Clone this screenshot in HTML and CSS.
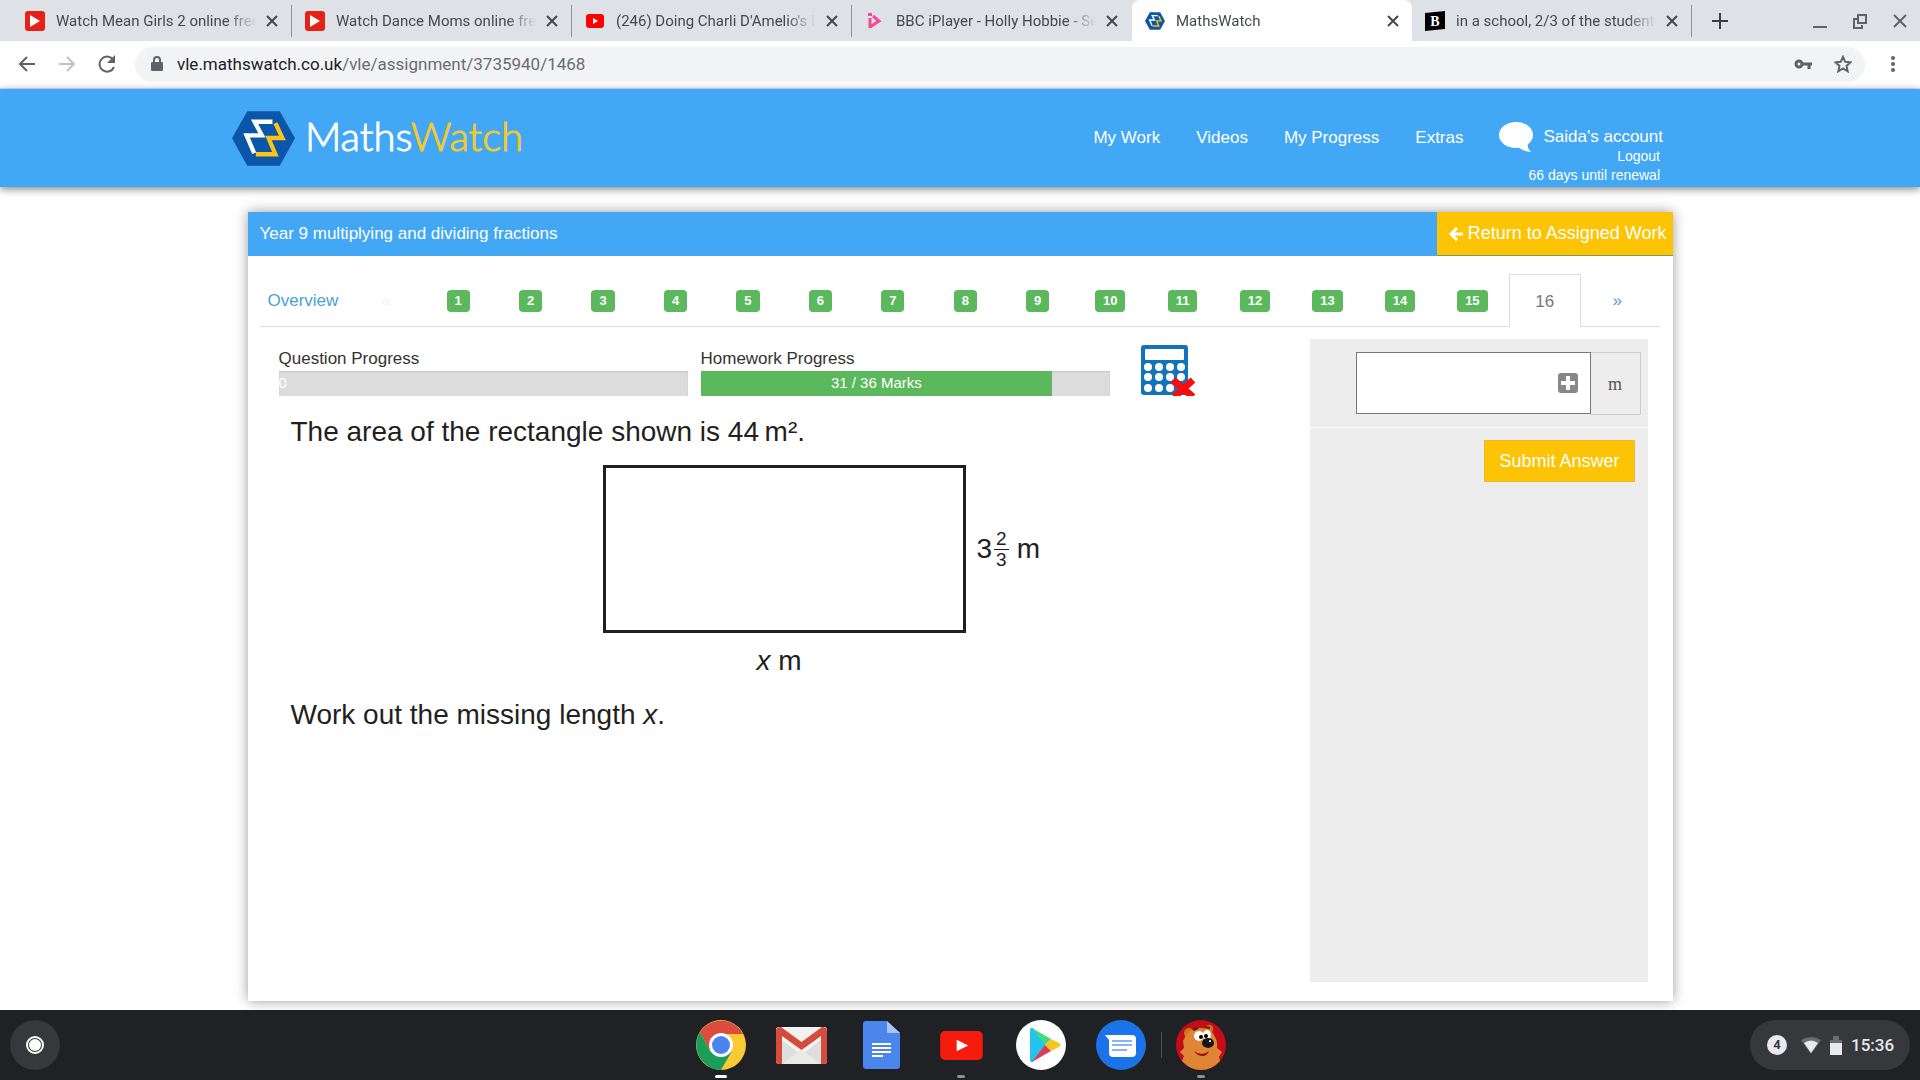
FILE: index.html
```html
<!DOCTYPE html>
<html lang="en">
<head>
    <meta charset="UTF-8" />
    <meta name="viewport" content="width=device-width, initial-scale=1" />
    <title>MathsWatch</title>
    <link rel="stylesheet" href="styles.css">
</head>
<body>
    <svg class="sprite" aria-hidden="true">
        <symbol id="close" viewBox="0 0 12 12"><path d="M1 1l10 10M11 1L1 11" stroke="currentColor" stroke-width="2" /></symbol>
        <symbol id="play-red" viewBox="0 0 20 20"><rect width="20" height="20" rx="3" fill="#e62117" /><path d="M5 4l10 6-10 6z" fill="#fff" /></symbol>
        <symbol id="youtube" viewBox="0 0 44 30"><rect width="44" height="30" rx="5" fill="#f61c0d" /><path d="M17 9l12 6-12 6z" fill="#fff" /></symbol>
        <symbol id="maths" viewBox="36 60 190 165">
            <path d="M36 142L82 60h98l46 82-46 83H82z" fill="#0b56a8" />
            <path d="M158 92h-54l22 41H80l23 54" fill="none" stroke="#fff" stroke-width="13" />
            <path d="M167 96l21 45h-42l21 49h-59" fill="none" stroke="#fcc419" stroke-width="13" />
        </symbol>
    </svg>

    <div class="tab-strip">
        <div class="tab">
            <svg class="favicon"><use href="#play-red" /></svg>
            <span class="tab-title">Watch Mean Girls 2 online free</span>
            <button class="tab-close" aria-label="Close tab"><svg><use href="#close" /></svg></button>
        </div>
        <div class="tab">
            <svg class="favicon"><use href="#play-red" /></svg>
            <span class="tab-title">Watch Dance Moms online free</span>
            <button class="tab-close" aria-label="Close tab"><svg><use href="#close" /></svg></button>
        </div>
        <div class="tab">
            <svg class="favicon" viewBox="0 0 20 20"><rect x="1" y="3" width="18" height="14" rx="3" fill="#f00" /><path d="M8 7l5 3-5 3z" fill="#fff" /></svg>
            <span class="tab-title">(246) Doing Charli D'Amelio's Dance</span>
            <button class="tab-close" aria-label="Close tab"><svg><use href="#close" /></svg></button>
        </div>
        <div class="tab before-active">
            <svg class="favicon" viewBox="0 0 20 20"><path d="M5 7v10M5 16l9-6-6-5" fill="none" stroke="#f54997" stroke-width="3" /><path d="M3 2h4v3H3z" fill="#f54997" /></svg>
            <span class="tab-title">BBC iPlayer - Holly Hobbie - Series</span>
            <button class="tab-close" aria-label="Close tab"><svg><use href="#close" /></svg></button>
        </div>
        <div class="tab active">
            <svg class="favicon"><use href="#maths" /></svg>
            <span class="tab-title">MathsWatch</span>
            <button class="tab-close" aria-label="Close tab"><svg><use href="#close" /></svg></button>
        </div>
        <div class="tab">
            <svg class="favicon" viewBox="0 0 20 20"><path d="M0 2l20-2v18L0 20z" /><text x="10" y="15" class="brainly">B</text></svg>
            <span class="tab-title">in a school, 2/3 of the students</span>
            <button class="tab-close" aria-label="Close tab"><svg><use href="#close" /></svg></button>
        </div>
        <button class="new-tab" aria-label="New tab"><svg viewBox="0 0 16 16"><path d="M8 0v16M0 8h16" stroke="#3c4043" stroke-width="2" /></svg></button>
        <div class="window-buttons">
            <button aria-label="Minimise"><svg viewBox="0 0 16 16"><path d="M1 14h14" stroke="#5f6368" stroke-width="2" /></svg></button>
            <button aria-label="Restore"><svg viewBox="0 0 16 16"><path d="M6 2h8v8H6zM5 6H2v9h8v-3" fill="none" stroke="#5f6368" stroke-width="2" /></svg></button>
            <button aria-label="Close window"><svg viewBox="0 0 16 16"><path d="M2 2l12 12M14 2L2 14" stroke="#5f6368" stroke-width="2" /></svg></button>
        </div>
    </div>

    <div class="toolbar">
        <button aria-label="Back"><svg viewBox="0 0 18 18"><path d="M17 9H2M9 2L2 9l7 7" fill="none" stroke="#5f6368" stroke-width="2" /></svg></button>
        <button aria-label="Forward"><svg viewBox="0 0 18 18"><path d="M1 9h15M9 2l7 7-7 7" fill="none" stroke="#bdc1c6" stroke-width="2" /></svg></button>
        <button aria-label="Reload"><svg viewBox="0 0 18 18"><path d="M15 4.500A7.500 7.500 0 1 0 16 12" fill="none" stroke="#5f6368" stroke-width="2" /><path d="M17 0v8H9z" fill="#5f6368" /></svg></button>
        <div class="omnibox">
            <svg class="lock" viewBox="0 0 12 16"><rect y="6" width="12" height="9" rx="1" fill="#5f6368" /><path d="M3 7V4a3 3 0 0 1 6 0v3" fill="none" stroke="#5f6368" stroke-width="2" /></svg>
            <div class="address" role="textbox" aria-label="Address"><span>vle.mathswatch.co.uk</span>/vle/assignment/3735940/1468</div>
            <button aria-label="Passwords"><svg viewBox="0 0 18 18"><circle cx="5" cy="9" r="3" fill="none" stroke="#5f6368" stroke-width="3" /><path d="M9 9h9M15 9v5" stroke="#5f6368" stroke-width="3" /></svg></button>
            <button aria-label="Bookmark"><svg viewBox="0 0 18 18"><path d="M9 1.800l2.200 5 5.300.5-4 3.600 1.200 5.400L9 13.500l-4.700 2.800 1.200-5.400-4-3.600 5.300-.5z" fill="none" stroke="#5f6368" stroke-width="2" /></svg></button>
        </div>
        <button aria-label="Menu"><svg viewBox="0 0 18 18" fill="#5f6368"><circle cx="9" cy="3" r="2" /><circle cx="9" cy="9" r="2" /><circle cx="9" cy="15" r="2" /></svg></button>
    </div>

    <header>
        <div class="header-inner">
            <a class="logo" href="#"><svg><use href="#maths" /></svg><span>Maths<b>Watch</b></span></a>
            <nav>
                <a href="#">My Work</a>
                <a href="#">Videos</a>
                <a href="#">My Progress</a>
                <a href="#">Extras</a>
            </nav>
            <div class="account">
                <a class="account-name" href="#">
                    <svg viewBox="0 0 35 30"><ellipse cx="17" cy="13" rx="17" ry="13" fill="#fff" /><path d="M18 24c3 3 8 6 14 6-3-3-4-6-3-10z" fill="#fff" /></svg>
                    Saida's account
                </a>
                <a class="account-line" href="#">Logout</a>
                <span class="account-line">66 days until renewal</span>
            </div>
        </div>
    </header>

    <main>
        <section class="panel">
            <div class="panel-title">
                <h1>Year 9 multiplying and dividing fractions</h1>
                <a class="return" href="#">
                    <svg viewBox="0 0 14 14"><path d="M14 7H3M8 1L2 7l6 6" fill="none" stroke="#fff" stroke-width="3" /></svg>
                    Return to Assigned Work
                </a>
            </div>

            <div class="questions">
                <a class="overview" href="#">Overview</a>
                <a class="previous" href="#">«</a>
                <a href="#"><span class="badge">1</span></a>
                <a href="#"><span class="badge">2</span></a>
                <a href="#"><span class="badge">3</span></a>
                <a href="#"><span class="badge">4</span></a>
                <a href="#"><span class="badge">5</span></a>
                <a href="#"><span class="badge">6</span></a>
                <a href="#"><span class="badge">7</span></a>
                <a href="#"><span class="badge">8</span></a>
                <a href="#"><span class="badge">9</span></a>
                <a href="#"><span class="badge">10</span></a>
                <a href="#"><span class="badge">11</span></a>
                <a href="#"><span class="badge">12</span></a>
                <a href="#"><span class="badge">13</span></a>
                <a href="#"><span class="badge">14</span></a>
                <a href="#"><span class="badge">15</span></a>
                <a class="current" href="#">16</a>
                <a href="#">»</a>
            </div>

            <div class="work">
                <div class="question">
                    <div class="progress-row">
                        <div class="progress">
                            <div>Question Progress</div>
                            <div class="bar"><div class="bar-fill" style="width: 0%">0</div></div>
                        </div>
                        <div class="progress">
                            <div>Homework Progress</div>
                            <div class="bar"><div class="bar-fill" style="width: 86%">31 / 36 Marks</div></div>
                        </div>
                        <svg class="calculator" viewBox="0 0 56 51">
                            <rect width="47" height="50" rx="3" fill="#1173ba" />
                            <rect x="4" y="4" width="39" height="11" rx="1" fill="#fff" />
                            <g fill="#fff">
                                <circle cx="7" cy="22" r="4" /><circle cx="18" cy="22" r="4" /><circle cx="29" cy="22" r="4" /><circle cx="40" cy="22" r="4" />
                                <circle cx="7" cy="32" r="4" /><circle cx="18" cy="32" r="4" /><circle cx="29" cy="32" r="4" /><circle cx="40" cy="32" r="4" />
                                <circle cx="7" cy="43" r="4" /><circle cx="18" cy="43" r="4" /><circle cx="29" cy="43" r="4" />
                            </g>
                            <path d="M32 35l20 17M52 35L33 52" stroke="#f70d0d" stroke-width="7" />
                        </svg>
                    </div>
                    <p>The area of the rectangle shown is 44&#8201;m².</p>
                    <div class="figure">
                        <div class="rectangle"></div>
                        <div class="side">3<span class="fraction"><span>2</span><span>3</span></span>m</div>
                        <div class="base"><i>x</i> m</div>
                    </div>
                    <p>Work out the missing length <i>x</i>.</p>
                </div>

                <form class="answer">
                    <div class="answer-row">
                        <div class="answer-box">
                            <input type="text" id="answer" autocomplete="off" />
                            <button type="button" class="keypad" aria-label="Open keypad"><svg viewBox="0 0 20 20"><rect width="20" height="20" rx="3" fill="#888" /><path d="M10 3v14M3 10h14" stroke="#fff" stroke-width="4" /></svg></button>
                        </div>
                        <label for="answer">m</label>
                    </div>
                    <div class="submit-row">
                        <button type="submit" class="submit">Submit Answer</button>
                    </div>
                </form>
            </div>
        </section>
    </main>

    <footer class="shelf">
        <button class="launcher" aria-label="Launcher"><svg viewBox="0 0 20 20"><circle cx="10" cy="10" r="8" fill="none" stroke="#fff" stroke-width="2" /><circle cx="10" cy="10" r="6" fill="#fff" /></svg></button>
        <div class="apps">
            <button class="app focused" aria-label="Chrome">
                <svg viewBox="0 0 51 51">
                    <circle cx="25" cy="25" r="25" fill="#fbc934" />
                    <path d="M4 12A25 25 0 0 1 47 14H25L14 31z" fill="#dc4b3e" />
                    <path d="M4 12A25 25 0 0 0 25 50l11-19-11 6-11-6z" fill="#1a9f5b" />
                    <circle cx="25" cy="25" r="12" fill="#fff" /><circle cx="25" cy="25" r="9" fill="#4a85ee" />
                </svg>
            </button>
            <button class="app" aria-label="Gmail">
                <svg viewBox="0 0 51 51">
                    <rect y="7" width="51" height="37" rx="3" fill="#f2f2f2" />
                    <path d="M6 20l19 15 20-15v24H6z" fill="#dedede" />
                    <path d="M6 44l19-15 20 15z" fill="#ebe9e5" />
                    <path d="M0 11q0-4 5-4l20.500 15L46 7q5 0 5 4v30q0 3-3 3h-3V16L25.500 30 6 16v28H3q-3 0-3-3z" fill="#d54b3d" />
                </svg>
            </button>
            <button class="app" aria-label="Docs">
                <svg viewBox="0 0 51 51">
                    <path d="M7 4q0-3 3-3h21l13 12v33q0 3-3 3H10q-3 0-3-3z" fill="#4a86ee" />
                    <path d="M31 1l13 12H31z" fill="#a8c5f7" />
                    <path d="M16 24h19M16 28h19M16 32h19M16 36h11" stroke="#fff" stroke-width="2" />
                </svg>
            </button>
            <button class="app running" aria-label="YouTube"><svg class="youtube"><use href="#youtube" /></svg></button>
            <button class="app" aria-label="Play Store">
                <svg viewBox="0 0 51 51">
                    <circle cx="25" cy="25" r="25" fill="#fff" />
                    <path d="M14 10q0-3 3-2l13 17-13 17q-3 1-3-2z" fill="#24c4ee" />
                    <path d="M16 8l19 11-6 6z" fill="#3ddc84" />
                    <path d="M35 19l8 4q3 2 0 4l-8 4-6-6z" fill="#fbc418" />
                    <path d="M16 42l13-17 6 6z" fill="#e03a5a" />
                </svg>
            </button>
            <button class="app" aria-label="Messages">
                <svg viewBox="0 0 51 51">
                    <circle cx="25" cy="25" r="25" fill="#1a73e8" />
                    <path d="M9 15h27q4 0 4 4v14q0 4-4 4H17q-4 0-4-4V20z" fill="#fff" />
                    <path d="M16 21h20M16 25h20M16 30h15" stroke="#8ab4f8" stroke-width="2" />
                </svg>
            </button>
            <span class="divider"></span>
            <button class="app running" aria-label="Toon Blast">
                <svg viewBox="0 0 51 51">
                    <circle cx="25" cy="25" r="25" fill="#c40d14" />
                    <circle cx="13" cy="13" r="5" fill="#d27422" /><circle cx="33" cy="9" r="4" fill="#d27422" />
                    <path d="M10 15q5-7 14-7 12 0 15 9 3 5 2 11l5 4-3 5 1 4q-8 9-19 9T6 41l2-5-4-4 4-4-1-7z" fill="#e08536" />
                    <path d="M18 31q8 6 15 0-2 5-6 5-6 0-9-5z" fill="#8e1418" />
                    <ellipse cx="23" cy="16" rx="5" ry="5" fill="#fff" /><ellipse cx="31" cy="15" rx="4" ry="5" fill="#fff" />
                    <circle cx="25" cy="17" r="2" /><circle cx="30" cy="16" r="2" />
                    <ellipse cx="32" cy="23" rx="6" ry="5" fill="#171415" /><circle cx="34" cy="21" r="1" fill="#fff" />
                    <path d="M17 10l5-2M29 7l5 1" stroke="#50240b" stroke-width="2" />
                </svg>
            </button>
        </div>
        <button class="status">
            <span class="notifications">4</span>
            <svg viewBox="0 0 20 20"><path d="M0 5q10-6 20 0l-10 14z" fill="#6b6c6f" /><path d="M3 8q7-5 14 0l-7 10z" fill="#e8eaed" /></svg>
            <svg class="battery" viewBox="0 0 12 20"><path d="M3 1h6v4h3v5H0V5h3z" fill="#6b6c6f" /><path d="M0 8h12v12H0z" fill="#e8eaed" /></svg>
            <span class="clock">15:36</span>
        </button>
    </footer>
</body>
</html>
```
FILE: styles.css
```css
* {
    box-sizing: border-box;
}
body {
    font-family: "Liberation Sans", Arial, sans-serif;
    font-size: 17px;
    color: #333;
    background: #fff;
    margin: 0;
    display: flex;
    flex-direction: column;
    min-height: 100vh;
}
a {
    color: inherit;
    text-decoration: none;
}
button {
    border: none;
    background: none;
    padding: 0;
    font-family: inherit;
    cursor: pointer;
}
svg {
    display: block;
    flex: none;
}
.sprite {
    position: absolute;
    width: 0;
    height: 0;
}

/* browser chrome */
.tab-strip {
    display: flex;
    align-items: center;
    height: 41px;
    padding: 0 12px;
    background: #dee1e6;
    font-family: Roboto, sans-serif;
    font-size: 15px;
    color: #45494d;
}
.tab {
    display: flex;
    align-items: center;
    flex: 0 1 280px;
    min-width: 0;
    height: 32px;
    padding: 0 13px;
    border-right: 1px solid #8f9297;
}
.tab.before-active {
    border-color: transparent;
}
.tab.active {
    height: 41px;
    background: #fff;
    border: none;
    border-radius: 8px 8px 0 0;
}
.favicon {
    width: 20px;
    height: 20px;
    margin-right: 11px;
}
.tab-title {
    flex: 1;
    overflow: hidden;
    white-space: nowrap;
    -webkit-mask-image: linear-gradient(to right, #000 85%, transparent);
    mask-image: linear-gradient(to right, #000 85%, transparent);
}
.tab-close {
    margin-left: 10px;
    color: #45494d;
}
.tab-close svg {
    width: 12px;
    height: 12px;
}
.brainly {
    font: bold 14px "Liberation Serif", serif;
    fill: #fff;
    text-anchor: middle;
}
.new-tab {
    margin-left: 20px;
}
.new-tab svg,
.window-buttons svg {
    width: 16px;
    height: 16px;
}
.window-buttons {
    display: flex;
    gap: 24px;
    margin-left: auto;
}
.toolbar {
    display: flex;
    align-items: center;
    gap: 22px;
    height: 48px;
    padding: 0 18px 1px;
    border-bottom: 1px solid #d6e9f8;
}
.toolbar svg {
    width: 18px;
    height: 18px;
}
.omnibox {
    display: flex;
    align-items: center;
    flex: 1;
    gap: 22px;
    height: 35px;
    margin: 0 -3px;
    padding: 0 13px 0 16px;
    border-radius: 18px;
    background: #f1f3f4;
    font-family: Roboto, sans-serif;
    font-size: 17px;
}
.omnibox .lock {
    width: 12px;
    height: 16px;
    margin-right: -8px;
}
.address {
    flex: 1;
    color: #696d71;
}
.address span {
    color: #202124;
}

/* site header */
header {
    background: #42a7f5;
    color: #fff;
    box-shadow: 0 2px 8px rgba(0,0,0,0.5);
}
.header-inner {
    display: flex;
    align-items: center;
    max-width: 1456px;
    height: 98px;
    margin: 0 auto;
    padding-right: 25px;
}
.logo {
    display: flex;
    align-items: center;
    gap: 10px;
    font-family: Lato, sans-serif;
    font-size: 40px;
    font-weight: 300;
    line-height: 44px;
    -webkit-text-stroke: 1px currentColor;
}
.logo svg {
    width: 63px;
    height: 55px;
}
.logo span {
    padding-bottom: 4px;
}
.logo b {
    font-weight: 300;
    color: #f2ca2c;
}
nav {
    display: flex;
    gap: 36px;
    margin-left: auto;
}
.account {
    display: flex;
    flex-direction: column;
    align-items: flex-end;
    margin-left: 35px;
    padding-top: 36px;
}
.account-name {
    display: flex;
    align-items: center;
    gap: 10px;
    height: 20px;
}
.account-name svg {
    width: 35px;
    height: 30px;
}
.account-line {
    padding-right: 3px;
    font-size: 14px;
    line-height: 19px;
}

/* assignment */
main {
    display: flex;
    flex: 1;
    padding: 25px 24px 9px;
}
.panel {
    display: flex;
    flex-direction: column;
    width: 100%;
    max-width: 1425px;
    margin: 0 auto;
    background: #fff;
    box-shadow: 0 0 12px rgba(0,0,0,0.4);
}
.panel-title {
    display: flex;
    justify-content: space-between;
    height: 44px;
    background: #42a7f5;
    color: #fff;
}
h1 {
    margin: 0;
    padding-left: 12px;
    font-size: 17px;
    font-weight: normal;
    line-height: 43px;
}
.return {
    display: flex;
    align-items: center;
    gap: 5px;
    padding: 0 6px 0 12px;
    background: #fcc404;
    border-bottom: 1px solid #7f9a55;
    font-size: 18px;
}
.return svg {
    width: 14px;
    height: 14px;
}
.questions {
    display: grid;
    grid-template-columns: 90px repeat(18, 1fr);
    margin: 18px 13px 0 12px;
    padding-right: 6px;
    border-bottom: 1px solid #ddd;
    color: #4a9fd8;
}
.questions a {
    display: flex;
    align-items: center;
    justify-content: center;
    height: 52px;
    padding-top: 2px;
}
.questions .overview {
    justify-content: flex-start;
    padding-left: 8px;
}
.questions .previous {
    color: #f3f3f3;
}
.badge {
    padding: 0 8px;
    border-radius: 4px;
    background: #5cb85c;
    color: #fff;
    font-size: 13px;
    font-weight: bold;
    line-height: 22px;
}
.questions .current {
    height: 53px;
    margin-bottom: -1px;
    border: 1px solid #ddd;
    border-bottom: none;
    background: #fff;
    color: #777;
}
.work {
    display: flex;
    flex: 1;
    padding: 12px 25px 19px 31px;
}
.question {
    flex: 1;
}
.progress-row {
    display: flex;
    gap: 13px;
    padding-top: 6px;
}
.progress {
    width: 409px;
    line-height: 26px;
}
.progress > :first-child {
    height: 26px;
    line-height: 28px;
}
.bar {
    height: 25px;
    background: #dcdcdc;
    box-shadow: inset 0 1px 2px rgba(0,0,0,0.1);
}
.bar-fill {
    height: 25px;
    background: #5cb85c;
    color: #fff;
    font-size: 15px;
    line-height: 24px;
    text-align: center;
}
.calculator {
    width: 56px;
    height: 51px;
    margin-left: 18px;
}
.question p {
    margin: 0 0 0 12px;
    padding: 18px 0 15px;
    color: #231f20;
    font-size: 28px;
    line-height: 36px;
}
.figure {
    display: grid;
    grid-template-columns: 363px auto;
    justify-content: start;
    align-items: center;
    column-gap: 11px;
    margin: 0 0 2px 324px;
    color: #231f20;
    font-size: 28px;
}
.rectangle {
    height: 168px;
    border: 3px solid #231f20;
}
.side {
    display: flex;
    align-items: center;
}
.fraction {
    display: flex;
    flex-direction: column;
    margin: 0 8px 0 2px;
    font-size: 19px;
    line-height: 20px;
    text-align: center;
}
.fraction span:first-child {
    padding: 0 2px;
    border-bottom: 1px solid #231f20;
}
.base {
    padding: 12px 10px 0 0;
    line-height: 32px;
    text-align: center;
}
.answer {
    width: 338px;
    background: #ededed;
}
.answer-row {
    display: flex;
    justify-content: flex-end;
    padding: 13px 7px 12px;
    border-bottom: 1px solid #fff;
}
.answer-box {
    position: relative;
    width: 235px;
}
.answer-box input {
    display: block;
    width: 100%;
    height: 62px;
    padding: 0 44px 0 12px;
    border: 1px solid #777;
    background: #fff;
    font-size: 17px;
}
.keypad {
    position: absolute;
    top: 21px;
    right: 13px;
}
.keypad svg {
    width: 20px;
    height: 20px;
}
.answer-row label {
    width: 50px;
    height: 63px;
    border: 1px solid #ccc;
    border-left: none;
    color: #555;
    font-family: "Liberation Serif", serif;
    font-size: 18px;
    line-height: 62px;
    text-align: center;
}
.submit-row {
    display: flex;
    justify-content: flex-end;
    padding: 12px 13px;
}
.submit {
    padding: 0 14px;
    border: 1px solid #eab92d;
    background: #fcc404;
    color: #fff;
    font-size: 18px;
    line-height: 40px;
}

/* shelf */
.shelf {
    display: flex;
    align-items: center;
    justify-content: space-between;
    height: 70px;
    padding: 0 10px;
    background: #202124;
    position: relative;
}
.launcher {
    display: flex;
    align-items: center;
    justify-content: center;
    width: 50px;
    height: 50px;
    border-radius: 50%;
    background: #37383b;
}
.launcher svg {
    width: 20px;
    height: 20px;
}
.apps {
    display: flex;
    align-items: center;
    gap: 29px;
    margin-left: 112px;
}
.app {
    position: relative;
    display: flex;
    align-items: center;
    justify-content: center;
    width: 51px;
    height: 52px;
}
.app svg {
    width: 51px;
    height: 51px;
}
.app .youtube {
    width: 43px;
    height: 29px;
}
.focused::after,
.running::after {
    content: "";
    position: absolute;
    bottom: -7px;
    width: 8px;
    height: 3px;
    border-radius: 2px;
    background: #8e8f91;
}
.focused::after {
    width: 12px;
    background: #fff;
}
.divider {
    width: 1px;
    height: 26px;
    margin: 0 -15px;
    background: #4d4e51;
}
.status {
    display: flex;
    align-items: center;
    gap: 9px;
    width: 160px;
    height: 50px;
    padding-left: 17px;
    border-radius: 25px;
    background: #37383b;
    color: #e8eaed;
    font-family: Roboto, sans-serif;
    font-size: 17px;
}
.status svg {
    width: 20px;
    height: 20px;
}
.status .battery {
    width: 12px;
}
.notifications {
    width: 20px;
    height: 20px;
    margin-right: 5px;
    border-radius: 50%;
    background: #e8eaed;
    color: #37383b;
    font-size: 13px;
    font-weight: bold;
    line-height: 20px;
}
.clock {
    font-weight: 500;
}
```
